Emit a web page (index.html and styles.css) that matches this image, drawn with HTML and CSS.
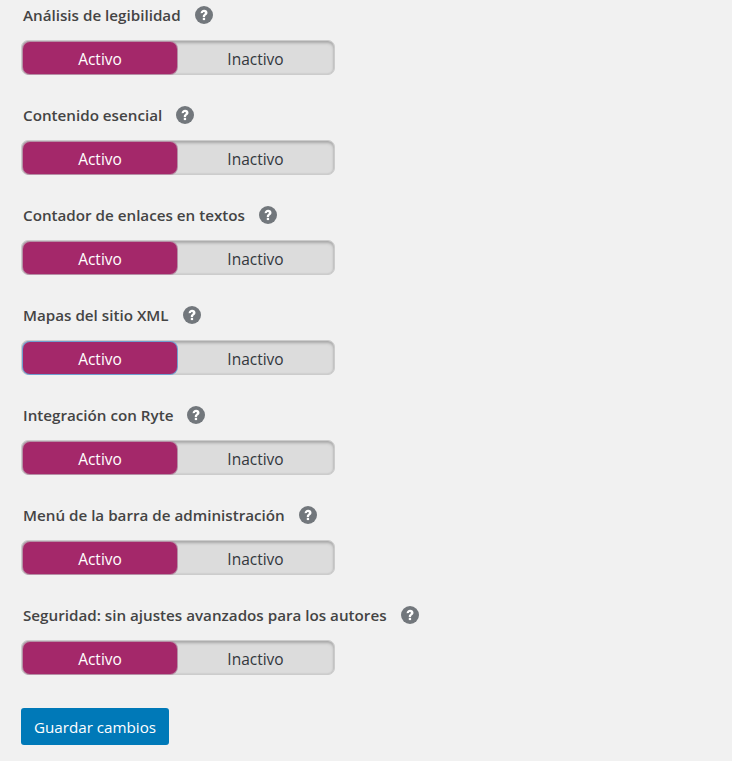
FILE: index.html
```html
<!DOCTYPE html>
<html lang="es">
<head>
<meta charset="utf-8">
<title>Ajustes</title>
<link rel="stylesheet" href="styles.css">
</head>
<body>
<svg class="defs" width="0" height="0" aria-hidden="true"><symbol id="help" viewBox="0 0 18 18"><circle cx="9" cy="9" r="9" fill="#72777c"/><path d="M5.6 7.2C5.7 5 7.2 3.8 9.1 3.8c2 0 3.4 1.2 3.4 2.9 0 1.2-.7 1.9-1.5 2.5-.7.5-.9.8-.9 1.4v.3H7.8v-.5c0-1.1.4-1.7 1.1-2.2.7-.5 1-.9 1-1.4 0-.6-.3-.9-.9-.9-.7 0-1 .4-1.1 1.1z" fill="#fff"/><rect x="7.8" y="11.8" width="2.3" height="2.3" fill="#fff"/></symbol></svg>
<form class="settings">
  <div class="field">
    <div class="field-label"><span>Análisis de legibilidad</span><svg class="help"><use href="#help"/></svg></div>
    <div class="toggle"><span class="opt on">Activo</span><span class="opt">Inactivo</span></div>
  </div>
  <div class="field">
    <div class="field-label"><span>Contenido esencial</span><svg class="help"><use href="#help"/></svg></div>
    <div class="toggle"><span class="opt on">Activo</span><span class="opt">Inactivo</span></div>
  </div>
  <div class="field">
    <div class="field-label"><span>Contador de enlaces en textos</span><svg class="help"><use href="#help"/></svg></div>
    <div class="toggle"><span class="opt on">Activo</span><span class="opt">Inactivo</span></div>
  </div>
  <div class="field">
    <div class="field-label"><span>Mapas del sitio XML</span><svg class="help"><use href="#help"/></svg></div>
    <div class="toggle"><span class="opt on focus">Activo</span><span class="opt">Inactivo</span></div>
  </div>
  <div class="field">
    <div class="field-label"><span>Integración con Ryte</span><svg class="help"><use href="#help"/></svg></div>
    <div class="toggle"><span class="opt on">Activo</span><span class="opt">Inactivo</span></div>
  </div>
  <div class="field">
    <div class="field-label"><span>Menú de la barra de administración</span><svg class="help"><use href="#help"/></svg></div>
    <div class="toggle"><span class="opt on">Activo</span><span class="opt">Inactivo</span></div>
  </div>
  <div class="field">
    <div class="field-label"><span>Seguridad: sin ajustes avanzados para los autores</span><svg class="help"><use href="#help"/></svg></div>
    <div class="toggle"><span class="opt on">Activo</span><span class="opt">Inactivo</span></div>
  </div>
  <button type="button" class="save">Guardar cambios</button>
</form>
</body>
</html>
```

FILE: styles.css
```css
html, body {
  margin: 0;
  padding: 0;
}
body {
  background: #f1f1f1;
  color: #444;
  font-family: "Open Sans", "Noto Sans", sans-serif;
  font-size: 14px;
  height: 761px;
  overflow: hidden;
}
.defs {
  position: absolute;
}
.settings {
  display: flex;
  flex-direction: column;
  align-items: flex-start;
  padding-left: 21px;
}
.field {
  height: 100px;
  box-sizing: border-box;
  display: flex;
  flex-direction: column;
  align-items: flex-start;
  gap: 15px;
  padding-top: 4px;
}
.field-label {
  display: flex;
  align-items: center;
  height: 21px;
  padding-left: 2px;
  font-size: 15.2px;
  font-weight: 600;
  color: #444;
  white-space: nowrap;
}
.help {
  width: 18px;
  height: 18px;
  margin-left: 14px;
}
.toggle {
  display: flex;
  box-sizing: border-box;
  width: 314px;
  height: 35px;
  border-radius: 7px;
  background: #dcdcdc;
  border: 1px solid #ccc;
  box-shadow: inset 0 2px 3px #a8a8a8, inset 0 0 2px #bbb;
  padding: 1px 0 0 1px;
}
.opt {
  flex: 1;
  display: flex;
  align-items: center;
  justify-content: center;
  padding-top: 1px;
  font-size: 15.5px;
  color: #32373c;
}
.opt.on {
  flex: 0 0 154px;
  background: #a4286a;
  color: #fff;
  border-radius: 7px;
  box-shadow: 0 0 0 1px #b58fa5;
}
.opt.focus {
  box-shadow: 0 0 0 1px #6f9fd0;
}
.save {
  margin-top: 8px;
  width: 148px;
  height: 37px;
  border: 0;
  border-radius: 3px;
  background: #0079b8;
  color: #fff;
  font-family: inherit;
  font-size: 15.2px;
  padding: 0;
}
```
